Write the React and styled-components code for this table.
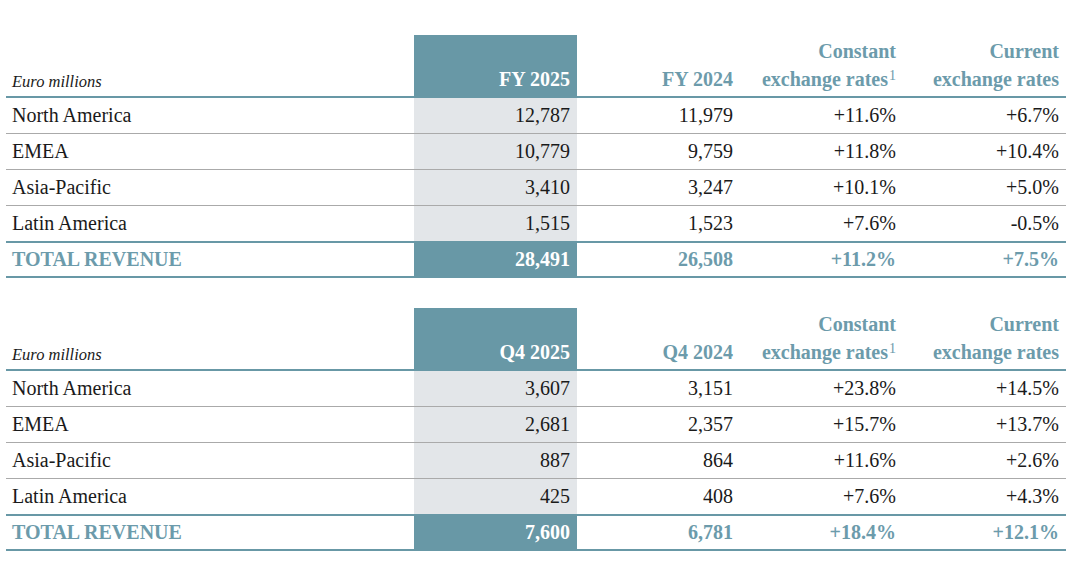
import React from "react";
import styled, { createGlobalStyle } from "styled-components";

const GlobalStyle = createGlobalStyle`
  body {
    margin: 0;
    background: #ffffff;
    font-family: "Liberation Serif", "Times New Roman", serif;
    color: #1a1a1a;
  }
`;

const teal = "#6898a6";
const tealText = "#6c9bab";
const shade = "#e3e6e9";

const tables = [
  {
    current: "FY 2025",
    previous: "FY 2024",
    rows: [
      ["North America", "12,787", "11,979", "+11.6%", "+6.7%"],
      ["EMEA", "10,779", "9,759", "+11.8%", "+10.4%"],
      ["Asia-Pacific", "3,410", "3,247", "+10.1%", "+5.0%"],
      ["Latin America", "1,515", "1,523", "+7.6%", "-0.5%"],
    ],
    total: ["TOTAL REVENUE", "28,491", "26,508", "+11.2%", "+7.5%"],
  },
  {
    current: "Q4 2025",
    previous: "Q4 2024",
    rows: [
      ["North America", "3,607", "3,151", "+23.8%", "+14.5%"],
      ["EMEA", "2,681", "2,357", "+15.7%", "+13.7%"],
      ["Asia-Pacific", "887", "864", "+11.6%", "+2.6%"],
      ["Latin America", "425", "408", "+7.6%", "+4.3%"],
    ],
    total: ["TOTAL REVENUE", "7,600", "6,781", "+18.4%", "+12.1%"],
  },
];

const RevenueTable = ({ data }) => (
  <Table>
    <colgroup>
      <col style={{ width: 408 }} />
      <col style={{ width: 163 }} />
      <col style={{ width: 163 }} />
      <col style={{ width: 163 }} />
      <col style={{ width: 163 }} />
    </colgroup>
    <thead>
      <tr>
        <Unit>Euro millions</Unit>
        <HeadCell highlight>{data.current}</HeadCell>
        <HeadCell>{data.previous}</HeadCell>
        <HeadCell>
          Constant
          <br />
          exchange rates<Sup>1</Sup>
        </HeadCell>
        <HeadCell>
          Current
          <br />
          exchange rates
        </HeadCell>
      </tr>
    </thead>
    <tbody>
      {data.rows.map((row, i) => (
        <Row key={row[0]} last={i === data.rows.length - 1}>
          <Label>{row[0]}</Label>
          <Num shaded>{row[1]}</Num>
          <Num>{row[2]}</Num>
          <Num>{row[3]}</Num>
          <Num>{row[4]}</Num>
        </Row>
      ))}
      <TotalRow>
        <TotalLabel>{data.total[0]}</TotalLabel>
        <TotalNum highlight>{data.total[1]}</TotalNum>
        <TotalNum>{data.total[2]}</TotalNum>
        <TotalNum>{data.total[3]}</TotalNum>
        <TotalNum>{data.total[4]}</TotalNum>
      </TotalRow>
    </tbody>
  </Table>
);

const App = () => (
  <>
    <GlobalStyle />
    <Page>
      {tables.map((t) => (
        <RevenueTable key={t.current} data={t} />
      ))}
    </Page>
  </>
);

const Page = styled.div`
  display: flex;
  flex-direction: column;
  gap: 30px;
  padding: 35px 0 0 6px;
  width: 1060px;
`;

const Table = styled.table`
  width: 1060px;
  table-layout: fixed;
  border-collapse: collapse;
  font-size: 20px;
`;

const Unit = styled.th`
  height: 57px;
  padding: 0 6px 4px;
  vertical-align: bottom;
  text-align: left;
  font-style: italic;
  font-weight: normal;
  font-size: 16.5px;
  color: #1a1a1a;
  border-bottom: 2px solid ${teal};
`;

const HeadCell = styled.th`
  height: 58px;
  padding: 0 7px 3px 0;
  vertical-align: bottom;
  text-align: right;
  font-weight: bold;
  line-height: 28px;
  white-space: nowrap;
  color: ${(p) => (p.highlight ? "#ffffff" : tealText)};
  background: ${(p) => (p.highlight ? teal : "transparent")};
  border-bottom: 2px solid ${teal};
`;

const Sup = styled.span`
  font-size: 14px;
  font-weight: normal;
  vertical-align: 6px;
  line-height: 0;
  margin-left: 1px;
`;

const Row = styled.tr`
  border-bottom: ${(p) => (p.last ? "none" : "1px solid #aaaaaa")};
`;

const Label = styled.td`
  height: 35px;
  padding: 0 6px;
  text-align: left;
  vertical-align: middle;
`;

const Num = styled.td`
  height: 35px;
  padding: 0 7px 0 0;
  text-align: right;
  vertical-align: middle;
  background: ${(p) => (p.shaded ? shade : "transparent")};
`;

const TotalRow = styled.tr`
  border-top: 2px solid ${teal};
  border-bottom: 2px solid ${teal};
`;

const TotalLabel = styled.td`
  height: 33px;
  padding: 0 6px;
  text-align: left;
  font-weight: bold;
  color: ${tealText};
`;

const TotalNum = styled.td`
  height: 33px;
  padding: 0 7px 0 0;
  text-align: right;
  font-weight: bold;
  color: ${(p) => (p.highlight ? "#ffffff" : tealText)};
  background: ${(p) => (p.highlight ? teal : "transparent")};
`;

export default App;
